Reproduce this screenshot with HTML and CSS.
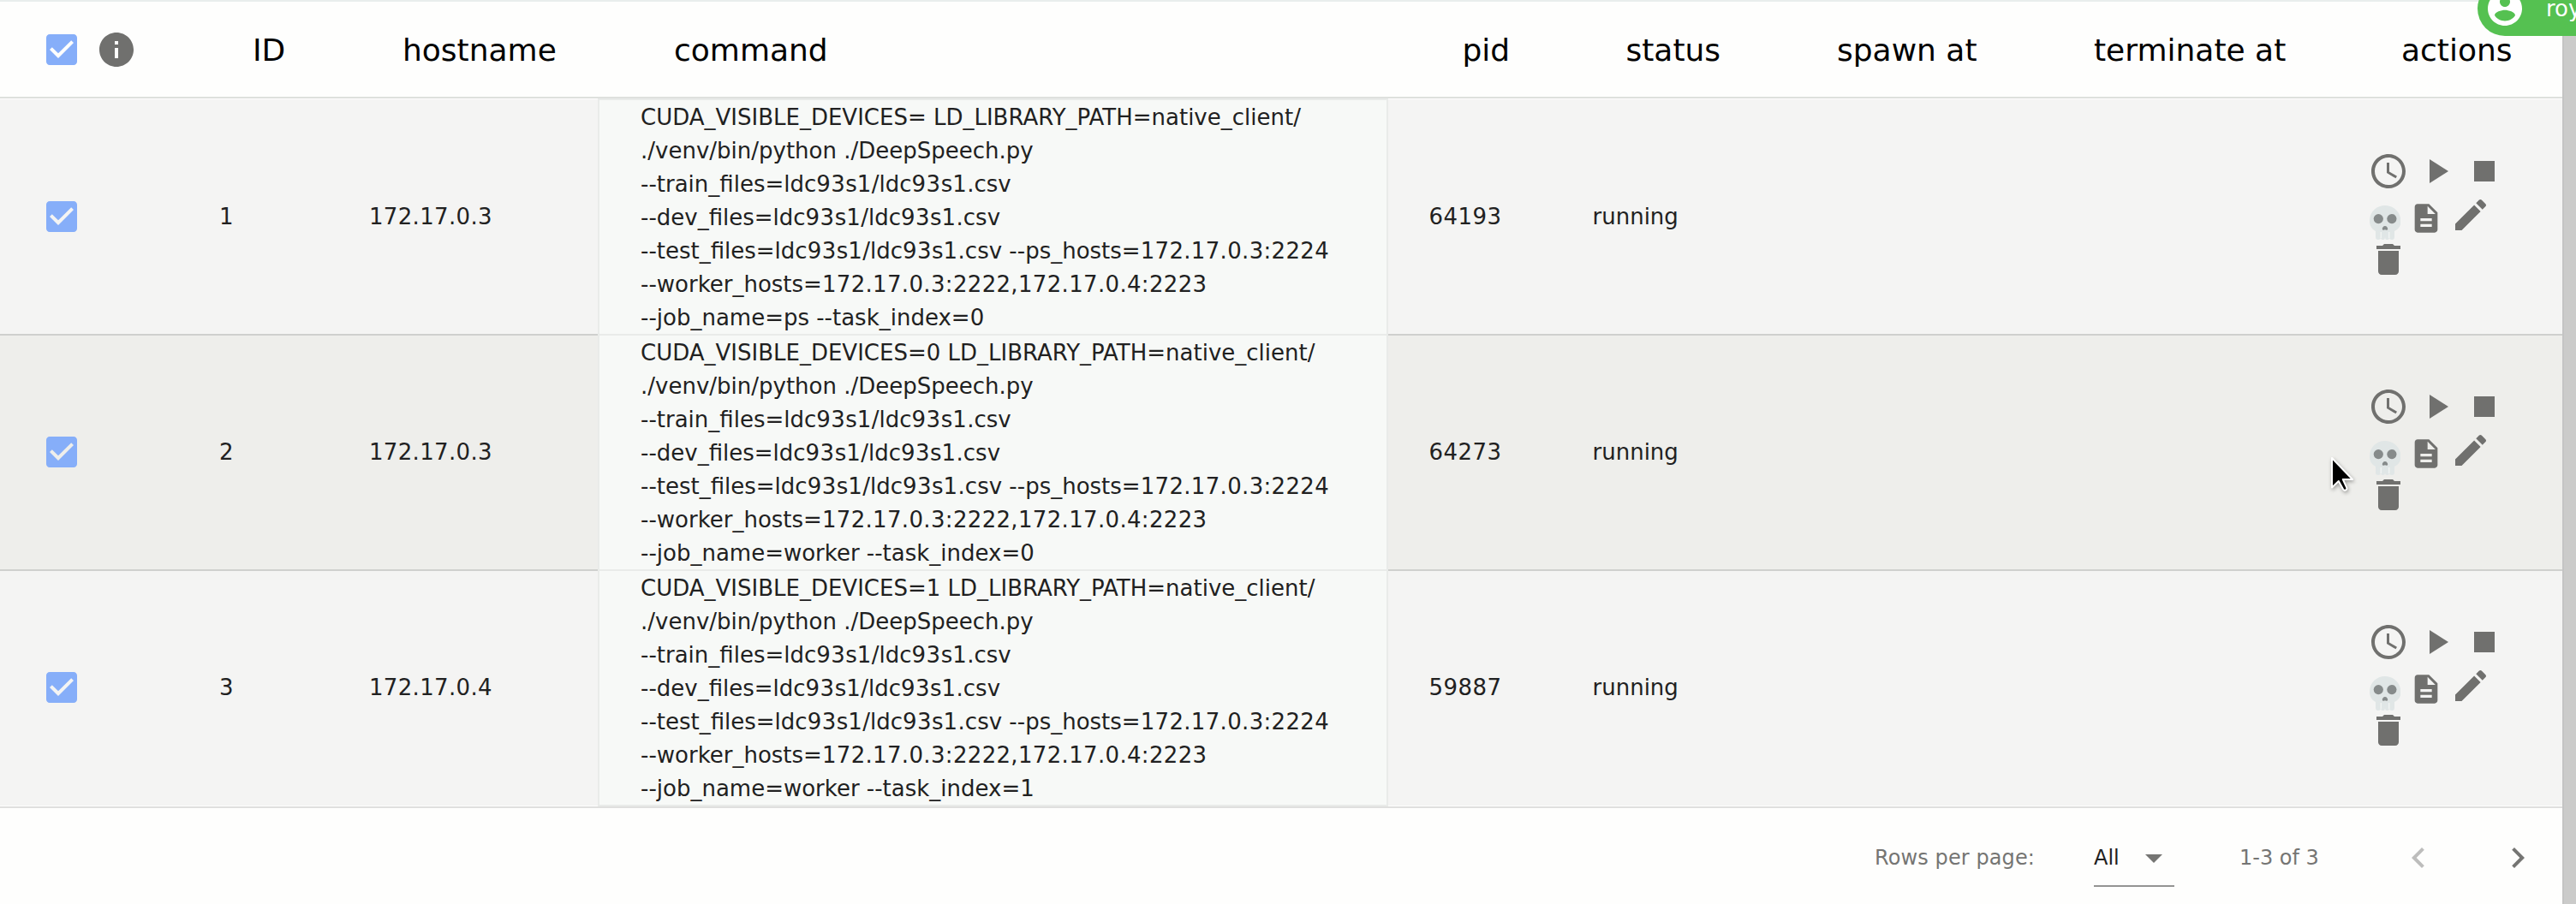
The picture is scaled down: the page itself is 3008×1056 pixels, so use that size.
FILE: index.html
```
<!DOCTYPE html>
<html lang="en">
<head>
<meta charset="utf-8">
<title>Tasks</title>
<link rel="stylesheet" href="styles.css">
</head>
<body>
<svg class="defs" aria-hidden="true">
  <symbol id="check" viewBox="0 0 24 24"><path d="M19 3H5c-1.11 0-2 .9-2 2v14c0 1.1.89 2 2 2h14c1.11 0 2-.9 2-2V5c0-1.1-.89-2-2-2zm-9 14l-5-5 1.41-1.41L10 14.17l7.59-7.59L19 8l-9 9z"/></symbol>
  <symbol id="info" viewBox="0 0 24 24"><path d="M12 2C6.48 2 2 6.48 2 12s4.48 10 10 10 10-4.480 10-10S17.520 2 12 2zm1 15h-2v-6h2v6zm0-8h-2V7h2v2z"/></symbol>
  <symbol id="clock" viewBox="0 0 24 24"><path d="M11.990 2C6.470 2 2 6.480 2 12s4.470 10 9.990 10C17.520 22 22 17.520 22 12S17.520 2 11.990 2zM12 20c-4.420 0-8-3.580-8-8s3.580-8 8-8 8 3.580 8 8-3.580 8-8 8zM12.500 7H11v6l5.250 3.150.75-1.230-4.500-2.670z"/></symbol>
  <symbol id="play" viewBox="0 0 24 24"><path d="M8 5v14l11-7z"/></symbol>
  <symbol id="stop" viewBox="0 0 24 24"><path d="M6 6h12v12H6z"/></symbol>
  <symbol id="doc" viewBox="0 0 24 24"><path d="M14 2H6c-1.100 0-1.990.9-1.990 2L4 20c0 1.100.89 2 1.990 2H18c1.100 0 2-.9 2-2V8l-6-6zm2 16H8v-2h8v2zm0-4H8v-2h8v2zm-3-5V3.500L18.500 9H13z"/></symbol>
  <symbol id="edit" viewBox="0 0 24 24"><path d="M3 17.250V21h3.750L17.810 9.940l-3.750-3.750L3 17.250zM20.710 7.040c.39-.39.39-1.020 0-1.410l-2.340-2.340c-.39-.39-1.020-.39-1.410 0l-1.830 1.830 3.750 3.750 1.830-1.830z"/></symbol>
  <symbol id="trash" viewBox="0 0 24 24"><path d="M6 19c0 1.100.9 2 2 2h8c1.100 0 2-.9 2-2V7H6v12zM19 4h-3.500l-1-1h-5l-1 1H5v2h14V4z"/></symbol>
  <symbol id="down" viewBox="0 0 24 24"><path d="M7 10l5 5 5-5z"/></symbol>
  <symbol id="left" viewBox="0 0 24 24"><path d="M15.410 7.410L14 6l-6 6 6 6 1.410-1.410L10.830 12z"/></symbol>
  <symbol id="right" viewBox="0 0 24 24"><path d="M10 6L8.590 7.410 13.170 12l-4.580 4.590L10 18l6-6z"/></symbol>
  <symbol id="skull" viewBox="0 0 36 40">
    <path fill="#e0e6e6" d="M18 0C8 0 0 7.500 0 18c0 6 2.500 9.500 7 12v7q0 3 3 3t3-3q0 3 2.500 3 2.500 0 2.500-3 0 3 2.500 3t2.500-3q0 3 3 3t3-3v-7c5-2.500 7.500-6 7.500-12C36 7.500 28 0 18 0z"/>
    <path stroke="#f0f3f2" stroke-width="1.500" d="M13.300 31v7M22.700 31v7"/>
    <circle fill="#868b8b" cx="10.300" cy="15.600" r="5.600"/><circle fill="#868b8b" cx="25.900" cy="15.600" r="5.600"/>
    <path fill="#868b8b" d="M18 24c-2 0-3.200 2-3.200 3.400 0 1.500 2 1.500 3.200.8 1.200.7 3.200.7 3.200-.8C21.200 26 20 24 18 24z"/>
  </symbol>
  <symbol id="user" viewBox="0 0 24 24"><path d="M12 2C6.480 2 2 6.480 2 12s4.480 10 10 10 10-4.480 10-10S17.520 2 12 2zm0 3c1.660 0 3 1.340 3 3s-1.340 3-3 3-3-1.340-3-3 1.340-3 3-3zm0 14.200c-2.500 0-4.710-1.280-6-3.220.03-1.990 4-3.080 6-3.080 1.990 0 5.970 1.090 6 3.080-1.290 1.940-3.500 3.220-6 3.220z"/></symbol>
</svg>

<main class="page">
  <section class="panel">
    <header class="grid head">
      <div class="select"><svg class="icon blue"><use href="#check"/></svg><svg class="icon info"><use href="#info"/></svg></div>
      <div>ID</div><div>hostname</div><div class="cmd-title">command</div><div>pid</div><div>status</div><div>spawn at</div><div>terminate at</div><div>actions</div>
    </header>

    <div class="grid row first">
      <div class="select"><svg class="icon blue"><use href="#check"/></svg></div>
      <div>1</div><div class="ip">172.17.0.3</div>
      <div class="cmd">CUDA_VISIBLE_DEVICES= LD_LIBRARY_PATH=native_client/<br>./venv/bin/python ./DeepSpeech.py<br>--train_files=ldc<span class="n">93</span>s<span class="n">1</span>/ldc<span class="n">93</span>s<span class="n">1</span>.csv<br>--dev_files=ldc<span class="n">93</span>s<span class="n">1</span>/ldc<span class="n">93</span>s<span class="n">1</span>.csv<br>--test_files=ldc<span class="n">93</span>s<span class="n">1</span>/ldc<span class="n">93</span>s<span class="n">1</span>.csv --ps_hosts=<span class="ip">172.17.0.3:2224</span><br>--worker_hosts=<span class="ip">172.17.0.3:2222,172.17.0.4:2223</span><br>--job_name=ps --task_index=0</div>
      <div class="n">64193</div><div>running</div><div></div><div></div>
      <div class="actions">
        <div class="line"><svg class="icon"><use href="#clock"/></svg><svg class="icon"><use href="#play"/></svg><svg class="icon"><use href="#stop"/></svg></div>
        <div class="line mid"><svg class="skull"><use href="#skull"/></svg><svg class="doc"><use href="#doc"/></svg><svg class="icon edit"><use href="#edit"/></svg></div>
        <div class="line"><svg class="icon"><use href="#trash"/></svg></div>
      </div>
    </div>

    <div class="grid row hover">
      <div class="select"><svg class="icon blue"><use href="#check"/></svg></div>
      <div>2</div><div class="ip">172.17.0.3</div>
      <div class="cmd">CUDA_VISIBLE_DEVICES=0 LD_LIBRARY_PATH=native_client/<br>./venv/bin/python ./DeepSpeech.py<br>--train_files=ldc<span class="n">93</span>s<span class="n">1</span>/ldc<span class="n">93</span>s<span class="n">1</span>.csv<br>--dev_files=ldc<span class="n">93</span>s<span class="n">1</span>/ldc<span class="n">93</span>s<span class="n">1</span>.csv<br>--test_files=ldc<span class="n">93</span>s<span class="n">1</span>/ldc<span class="n">93</span>s<span class="n">1</span>.csv --ps_hosts=<span class="ip">172.17.0.3:2224</span><br>--worker_hosts=<span class="ip">172.17.0.3:2222,172.17.0.4:2223</span><br>--job_name=worker --task_index=0</div>
      <div class="n">64273</div><div>running</div><div></div><div></div>
      <div class="actions">
        <div class="line"><svg class="icon"><use href="#clock"/></svg><svg class="icon"><use href="#play"/></svg><svg class="icon"><use href="#stop"/></svg></div>
        <div class="line mid"><svg class="skull"><use href="#skull"/></svg><svg class="doc"><use href="#doc"/></svg><svg class="icon edit"><use href="#edit"/></svg></div>
        <div class="line"><svg class="icon"><use href="#trash"/></svg></div>
      </div>
    </div>

    <div class="grid row last">
      <div class="select"><svg class="icon blue"><use href="#check"/></svg></div>
      <div>3</div><div class="ip">172.17.0.4</div>
      <div class="cmd">CUDA_VISIBLE_DEVICES=1 LD_LIBRARY_PATH=native_client/<br>./venv/bin/python ./DeepSpeech.py<br>--train_files=ldc<span class="n">93</span>s<span class="n">1</span>/ldc<span class="n">93</span>s<span class="n">1</span>.csv<br>--dev_files=ldc<span class="n">93</span>s<span class="n">1</span>/ldc<span class="n">93</span>s<span class="n">1</span>.csv<br>--test_files=ldc<span class="n">93</span>s<span class="n">1</span>/ldc<span class="n">93</span>s<span class="n">1</span>.csv --ps_hosts=<span class="ip">172.17.0.3:2224</span><br>--worker_hosts=<span class="ip">172.17.0.3:2222,172.17.0.4:2223</span><br>--job_name=worker --task_index=1</div>
      <div class="n">59887</div><div>running</div><div></div><div></div>
      <div class="actions">
        <div class="line"><svg class="icon"><use href="#clock"/></svg><svg class="icon"><use href="#play"/></svg><svg class="icon"><use href="#stop"/></svg></div>
        <div class="line mid"><svg class="skull"><use href="#skull"/></svg><svg class="doc"><use href="#doc"/></svg><svg class="icon edit"><use href="#edit"/></svg></div>
        <div class="line"><svg class="icon"><use href="#trash"/></svg></div>
      </div>
    </div>

    <footer class="foot">
      <span class="label">Rows per page:</span>
      <div class="pick"><span>All</span><svg class="icon"><use href="#down"/></svg></div>
      <span class="range">1-3 of 3</span>
      <svg class="icon prev"><use href="#left"/></svg>
      <svg class="icon next"><use href="#right"/></svg>
    </footer>
  </section>
  <div class="scrollbar"></div>
</main>

<div class="chip"><svg class="icon"><use href="#user"/></svg><span>roy</span></div>
<svg class="cursor" viewBox="0 0 28 42"><path d="M2 2v34.500l7.800-7.500 5.300 9.500q1.200 2 3.200.8 1.800-1 .8-3l-4.300-9.300H26z" fill="#000" stroke="#fff" stroke-width="2" stroke-linejoin="round"/></svg>
</body>
</html>
```
FILE: styles.css
```
* { box-sizing: border-box; }
body {
  margin: 0;
  height: 1056px;
  position: relative;
  overflow: hidden;
  font: 26px/39px "DejaVu Sans", sans-serif;
  color: #212121;
  background: #fefefd;
}
.defs { position: absolute; width: 0; height: 0; }
.page { display: flex; height: 1056px; }
.panel { flex: 1; border-top: 2px solid #e9eeed; }
.scrollbar { width: 16px; background: #cbcbca; border-left: 2px solid #c4c4c4; }

.icon { width: 48px; height: 48px; flex: none; display: block; fill: #70706e; }
.blue { fill: #86aef9; }
.n { letter-spacing: .46px; }
.ip { letter-spacing: .33px; }

.grid {
  display: grid;
  grid-template-columns: 256px 175px 267px 970.5px 191px 246.5px 300px 359px 227px;
  align-items: center;
}
.select { display: flex; gap: 16px; padding-left: 48px; }

.head {
  height: 113px;
  padding-top: 1px;
  border-bottom: 2px solid #dee0dd;
  font-size: 36px;
  color: #000;
}
.head > div:not(.select) { padding-left: 39px; }
.head > .cmd-title:not(.select) { padding-left: 89px; }

.row {
  height: 275px;
  padding-bottom: 1px;
  border-bottom: 2px solid #cfd0ce;
  background: #f4f4f3;
}
.row.hover { background: #eeeeeb; }
.row.first {
  height: 277px;
  padding-top: 1px;
  border-top: 1px solid #fefefd;
}
.row.last {
  height: 277px;
  padding-bottom: 3px;
  border-color: #dfdfde;
  box-shadow: inset 0 -1px #fefefd;
}
.cmd {
  width: 923px;
  height: 275px;
  align-self: start;
  margin-bottom: -3px;
  padding: 1px 0 0 48px;
  border: 2px solid #e9ebe9;
  border-top: 0;
  background: #f7f9f7;
  white-space: nowrap;
}
.first .cmd {
  height: 277px;
  margin-top: -2px;
  border-top: 2px solid #e9ebe9;
}
.actions { display: flex; flex-direction: column; padding-bottom: 3px; }
.line { display: flex; gap: 8px; height: 48px; }
.mid { padding-left: 2px; gap: 0; height: 55px; }
.skull { width: 36px; height: 40px; margin-top: 16px; flex: none; }
.doc { width: 40px; height: 40px; margin: 11px 8px 0 10px; flex: none; fill: #70706e; }
.edit { margin-top: 3px; }

.foot {
  display: flex;
  align-items: center;
  height: 112px;
  padding: 4px 28px 0 2189px;
  font-size: 24px;
  color: #757573;
}
.foot .icon { fill: #757573; }
.label { width: 256px; letter-spacing: .1px; }
.pick {
  display: flex;
  align-items: center;
  width: 94px;
  height: 68px;
  padding-top: 2px;
  border-bottom: 2px solid #949493;
  color: #212121;
}
.pick span { width: 46px; }
.range { width: 185px; padding-left: 76px; white-space: nowrap; }
.foot .prev { fill: #bdbdbc; margin-left: 76px; }
.foot .next { margin-left: 68px; }

.chip {
  position: absolute;
  left: 2893px;
  top: -22px;
  width: 115px;
  height: 64px;
  padding-left: 8px;
  display: flex;
  align-items: center;
  gap: 24px;
  overflow: hidden;
  border-radius: 32px 0 0 32px;
  background: #55c151;
  color: #fff;
}
.chip .icon { fill: #fff; }
.cursor {
  position: absolute;
  left: 2721px;
  top: 533px;
  width: 28px;
  height: 42px;
  filter: drop-shadow(1px 2px 2px rgba(0,0,0,.35));
}
```
